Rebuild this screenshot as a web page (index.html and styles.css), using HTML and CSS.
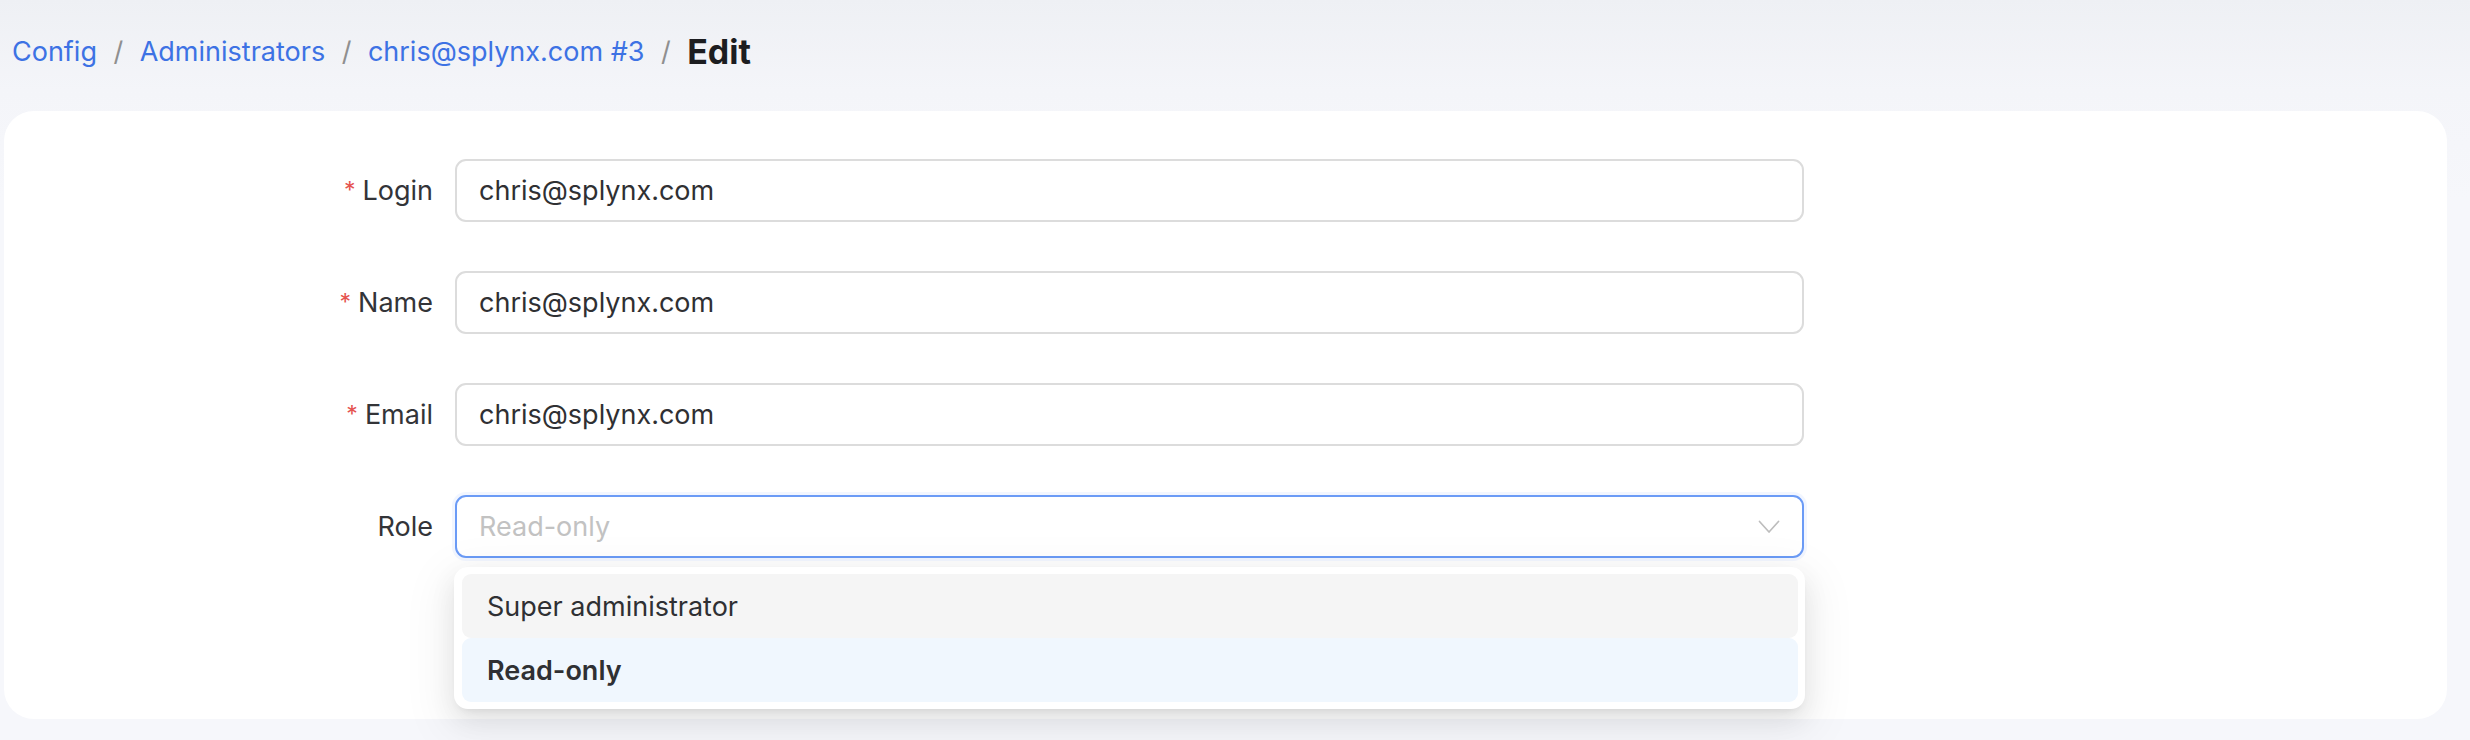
FILE: index.html
```html
<!DOCTYPE html>
<html lang="en">
<head>
<meta charset="utf-8">
<title>Edit administrator</title>
<link rel="stylesheet" href="styles.css">
</head>
<body>
<div class="page">
  <nav class="crumbs">
    <a class="crumb-link" href="#">Config</a>
    <span class="sep">/</span>
    <a class="crumb-link" href="#">Administrators</a>
    <span class="sep">/</span>
    <a class="crumb-link" href="#">chris@splynx.com #3</a>
    <span class="sep">/</span>
    <span class="crumb-current">Edit</span>
  </nav>
  <main class="card">
    <form class="form">
      <div class="row">
        <label class="label"><span class="req">*</span>Login</label>
        <div class="field"><div class="input">chris@splynx.com</div></div>
      </div>
      <div class="row">
        <label class="label"><span class="req">*</span>Name</label>
        <div class="field"><div class="input">chris@splynx.com</div></div>
      </div>
      <div class="row">
        <label class="label"><span class="req">*</span>Email</label>
        <div class="field"><div class="input">chris@splynx.com</div></div>
      </div>
      <div class="row">
        <label class="label">Role</label>
        <div class="field">
          <div class="input select focused">
            <span class="placeholder">Read-only</span>
            <svg class="chevron" width="22" height="14" viewBox="0 0 22 14"><path d="M1.5 1.5 L11 12 L20.5 1.5" fill="none" stroke="#bdbdbd" stroke-width="1.7" stroke-linecap="round" stroke-linejoin="round"/></svg>
          </div>
          <div class="dropdown">
            <div class="option hover">Super administrator</div>
            <div class="option selected">Read-only</div>
          </div>
        </div>
      </div>
    </form>
  </main>
</div>
</body>
</html>
```

FILE: styles.css
```css
* { box-sizing: border-box; }
html, body { margin: 0; padding: 0; }
body {
  width: 2470px;
  height: 740px;
  overflow: hidden;
  font-family: Inter, "Noto Sans", "Liberation Sans", sans-serif;
  background: linear-gradient(180deg, #eef0f4 0px, #f4f5f9 90px, #f6f7fb 200px);
}
.page {
  display: flex;
  flex-direction: column;
  height: 740px;
}
.crumbs {
  display: flex;
  align-items: center;
  height: 111px;
  padding: 0 0 8px 12px;
  font-size: 27px;
  line-height: 1;
}
.crumb-link {
  color: #3d72e4;
  text-decoration: none;
}
.sep {
  color: #8f8f8f;
  margin: 0 16.5px;
}
.crumb-current {
  font-size: 34px;
  font-weight: 700;
  color: #1c1d20;
}
.card {
  margin: 0 23px 21px 4px;
  flex: 1;
  background: #ffffff;
  border-radius: 30px;
  padding-top: 48px;
}
.form {
  display: flex;
  flex-direction: column;
  gap: 49px;
}
.row {
  display: grid;
  grid-template-columns: 429px 1349px;
  column-gap: 22px;
  align-items: center;
}
.label {
  text-align: right;
  font-size: 27px;
  color: #333438;
}
.req {
  color: #e5534f;
  font-size: 23px;
  margin-right: 7px;
  position: relative;
  top: -2px;
}
.field {
  position: relative;
}
.input {
  height: 63px;
  border: 2px solid #dcdcdc;
  border-radius: 11px;
  padding: 0 22px;
  display: flex;
  align-items: center;
  font-size: 27px;
  color: #2f3033;
  background: #fff;
}
.select.focused {
  border-color: #6b9bf6;
  box-shadow: 0 0 0 3px rgba(90, 145, 255, 0.08);
  justify-content: space-between;
}
.placeholder {
  color: #c2c2c2;
}
.chevron {
  margin-right: 0;
}
.dropdown {
  position: absolute;
  left: -1px;
  top: 72px;
  width: 1351px;
  background: #fff;
  border-radius: 14px;
  padding: 7px 7px 7px 8px;
  box-shadow: 0 10px 26px 0 rgba(0, 0, 0, 0.08), 0 5px 10px -6px rgba(0, 0, 0, 0.12), 0 14px 45px 13px rgba(0, 0, 0, 0.05);
  z-index: 5;
}
.option {
  height: 64px;
  display: flex;
  align-items: center;
  padding: 0 25px;
  border-radius: 9px;
  font-size: 27px;
  color: #2f3033;
}
.option.hover { background: #f5f5f5; }
.option.selected { background: #f0f7fe; font-weight: 600; }
```
